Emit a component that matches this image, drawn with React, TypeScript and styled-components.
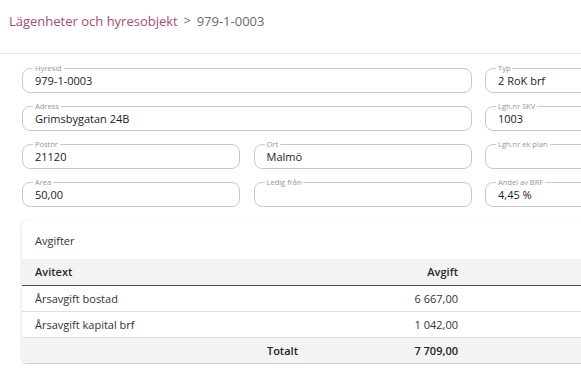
import React from 'react';
import styled, { createGlobalStyle } from 'styled-components';

const GlobalStyle = createGlobalStyle`
  html, body {
    margin: 0;
    padding: 0;
    background: #ffffff;
    overflow: hidden;
  }
  body {
    font-family: 'Open Sans', 'Noto Sans', sans-serif;
    color: #222;
  }
`;

const Page = styled.div`
  width: 720px;
`;

const Header = styled.header`
  box-sizing: border-box;
  height: 54px;
  display: flex;
  align-items: flex-start;
  padding: 12px 9px 0 9px;
  border-bottom: 1px solid #e2e2e2;
  font-size: 13px;
  line-height: 18px;
`;

const Crumb = styled.a`
  color: #a8497a;
  text-decoration: none;
`;

const CrumbSep = styled.span`
  color: #666;
  margin: 0 6px 0 6px;
  font-size: 12px;
`;

const CrumbCurrent = styled.span`
  color: #6a6a6a;
`;

const Content = styled.main`
  padding: 11px 0 0 22px;
`;

const FieldGrid = styled.div`
  display: grid;
  grid-template-columns: repeat(3, 218px);
  column-gap: 13.5px;
  row-gap: 10px;
`;

const Field = styled.fieldset<{ span?: number }>`
  grid-column: span ${(p) => p.span || 1};
  box-sizing: border-box;
  height: 28px;
  margin: 0;
  padding: 0 10px;
  border: 1px solid #c9c9c9;
  border-radius: 8px;
  min-width: 0;
`;

const Legend = styled.legend`
  font-size: 7.5px;
  line-height: 6px;
  padding: 0 2px;
  color: #959595;
`;

const Value = styled.div`
  font-size: 11px;
  line-height: 14px;
  padding: 3px 0 0 2px;
  color: #222;
`;

const Card = styled.section`
  margin-top: 13px;
  width: 680px;
  background: #fff;
  border-radius: 6px;
  box-shadow: 0 1px 3px rgba(0, 0, 0, 0.18), 0 0 1px rgba(0, 0, 0, 0.06);
  overflow: hidden;
`;

const CardTitle = styled.div`
  box-sizing: border-box;
  height: 39px;
  padding: 2px 0 0 13px;
  display: flex;
  align-items: center;
  font-size: 11px;
  color: #333;
`;

const Table = styled.table`
  width: 100%;
  border-collapse: collapse;
  font-size: 11px;
  color: #333;
`;

const Th = styled.th<{ right?: boolean; w?: number }>`
  height: 26px;
  padding: 0 12px 0 13px;
  background: #f3f3f3;
  border-bottom: 1px solid #4a505c;
  font-weight: 600;
  text-align: ${(p) => (p.right ? 'right' : 'left')};
  width: ${(p) => (p.w ? `${p.w}px` : 'auto')};
  box-sizing: border-box;
  color: #2a2a2a;
`;

const Td = styled.td<{ right?: boolean }>`
  height: 25px;
  padding: 0 12px 0 13px;
  border-bottom: 1px solid #dedede;
  text-align: ${(p) => (p.right ? 'right' : 'left')};
`;

const TotalRow = styled.tr`
  background: #f3f3f3;
  font-weight: 600;
  color: #222;

  td {
    border-bottom: 1px solid #d0d0d0;
    height: 25px;
  }
`;

const fields = [
  { label: 'Hyresid', value: '979-1-0003', span: 2 },
  { label: 'Typ', value: '2 RoK brf' },
  { label: 'Adress', value: 'Grimsbygatan 24B', span: 2 },
  { label: 'Lgh.nr SKV', value: '1003' },
  { label: 'Postnr', value: '21120' },
  { label: 'Ort', value: 'Malmö' },
  { label: 'Lgh.nr ek plan', value: '' },
  { label: 'Area', value: '50,00' },
  { label: 'Ledig från', value: '' },
  { label: 'Andel av BRF', value: '4,45 %' },
];

const fees = [
  { text: 'Årsavgift bostad', amount: '6 667,00' },
  { text: 'Årsavgift kapital brf', amount: '1 042,00' },
];

export default function App() {
  return (
    <Page>
      <GlobalStyle />
      <Header>
        <Crumb href="#">Lägenheter och hyresobjekt</Crumb>
        <CrumbSep>&gt;</CrumbSep>
        <CrumbCurrent>979-1-0003</CrumbCurrent>
      </Header>
      <Content>
        <FieldGrid>
          {fields.map((f) => (
            <Field key={f.label} span={f.span}>
              <Legend>{f.label}</Legend>
              <Value>{f.value || '\u00a0'}</Value>
            </Field>
          ))}
        </FieldGrid>
        <Card>
          <CardTitle>Avgifter</CardTitle>
          <Table>
            <thead>
              <tr>
                <Th w={288}>Avitext</Th>
                <Th right w={160}>Avgift</Th>
                <Th />
              </tr>
            </thead>
            <tbody>
              {fees.map((f) => (
                <tr key={f.text}>
                  <Td>{f.text}</Td>
                  <Td right>{f.amount}</Td>
                  <Td />
                </tr>
              ))}
              <TotalRow>
                <Td right>Totalt</Td>
                <Td right>7 709,00</Td>
                <Td />
              </TotalRow>
            </tbody>
          </Table>
        </Card>
      </Content>
    </Page>
  );
}
